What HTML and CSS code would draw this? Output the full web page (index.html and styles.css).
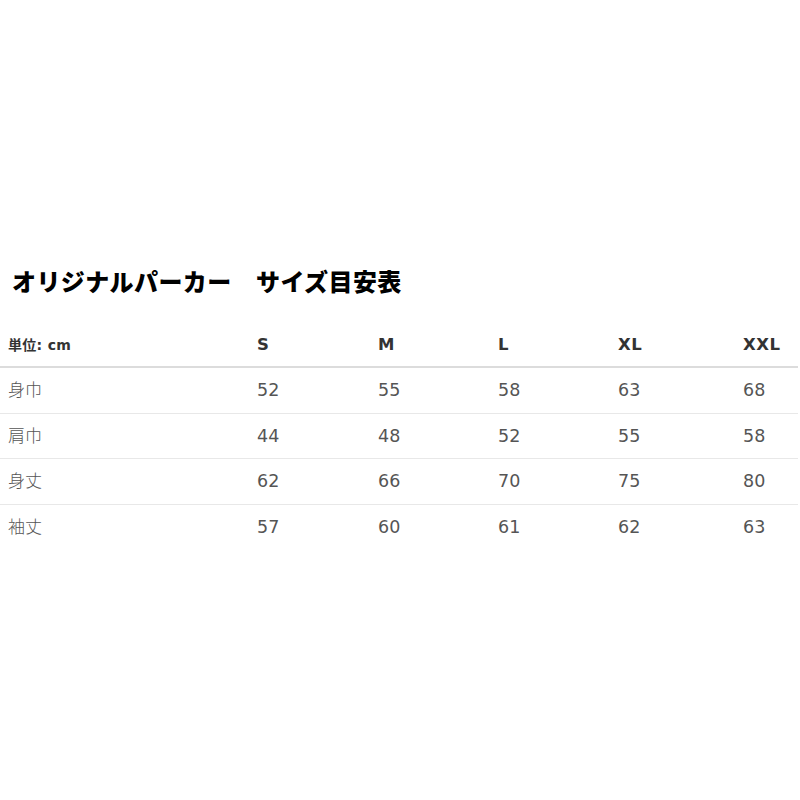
FILE: index.html
```html
<!DOCTYPE html>
<html lang="ja">
<head>
<meta charset="utf-8">
<title>オリジナルパーカー サイズ目安表</title>
<link rel="stylesheet" href="styles.css">
</head>
<body>
<div class="sheet">
  <h1 class="title">オリジナルパーカー　サイズ目安表</h1>
  <div class="table">
    <div class="row head">
      <div class="cell label">単位: cm</div>
      <div class="cell">S</div>
      <div class="cell">M</div>
      <div class="cell">L</div>
      <div class="cell">XL</div>
      <div class="cell">XXL</div>
    </div>
    <div class="row">
      <div class="cell label">身巾</div>
      <div class="cell">52</div><div class="cell">55</div><div class="cell">58</div><div class="cell">63</div><div class="cell">68</div>
    </div>
    <div class="row">
      <div class="cell label">肩巾</div>
      <div class="cell">44</div><div class="cell">48</div><div class="cell">52</div><div class="cell">55</div><div class="cell">58</div>
    </div>
    <div class="row">
      <div class="cell label">身丈</div>
      <div class="cell">62</div><div class="cell">66</div><div class="cell">70</div><div class="cell">75</div><div class="cell">80</div>
    </div>
    <div class="row last">
      <div class="cell label">袖丈</div>
      <div class="cell">57</div><div class="cell">60</div><div class="cell">61</div><div class="cell">62</div><div class="cell">63</div>
    </div>
  </div>
</div>
</body>
</html>
```
FILE: styles.css
```css
html, body {
  margin: 0;
  padding: 0;
  background: #ffffff;
}
.sheet {
  padding-top: 269px;
  width: 800px;
}
.title {
  margin: 0 0 0 12px;
  font-family: "Noto Sans CJK JP", "Noto Sans", sans-serif;
  font-weight: 900;
  font-size: 24px;
  line-height: 24px;
  letter-spacing: 0.4px;
  color: #000;
}
.table {
  margin-top: 29px;
  width: 798px;
}
.row {
  display: grid;
  grid-template-columns: 257px 121px 120px 120px 125px 1fr;
  align-items: center;
  height: 44.5px;
  border-bottom: 1px solid #e8e8e8;
  font-family: "DejaVu Sans", Verdana, sans-serif;
  font-size: 17.5px;
  color: #555;
}
.row.head {
  height: 44px;
  border-bottom: 2px solid #dcdcdc;
  font-weight: bold;
  font-size: 16.5px;
  letter-spacing: 0.5px;
  color: #333;
}
.row.last {
  border-bottom: none;
}
.label {
  padding-left: 8px;
  padding-bottom: 3px;
  font-family: "Noto Sans CJK JP", sans-serif;
  font-size: 17px;
  font-weight: 300;
  color: #555;
}
.head .label {
  padding-bottom: 0;
  font-family: "DejaVu Sans", "Noto Sans CJK JP", sans-serif;
  font-size: 14px;
  letter-spacing: 0.3px;
  font-weight: bold;
  color: #333;
}
```
